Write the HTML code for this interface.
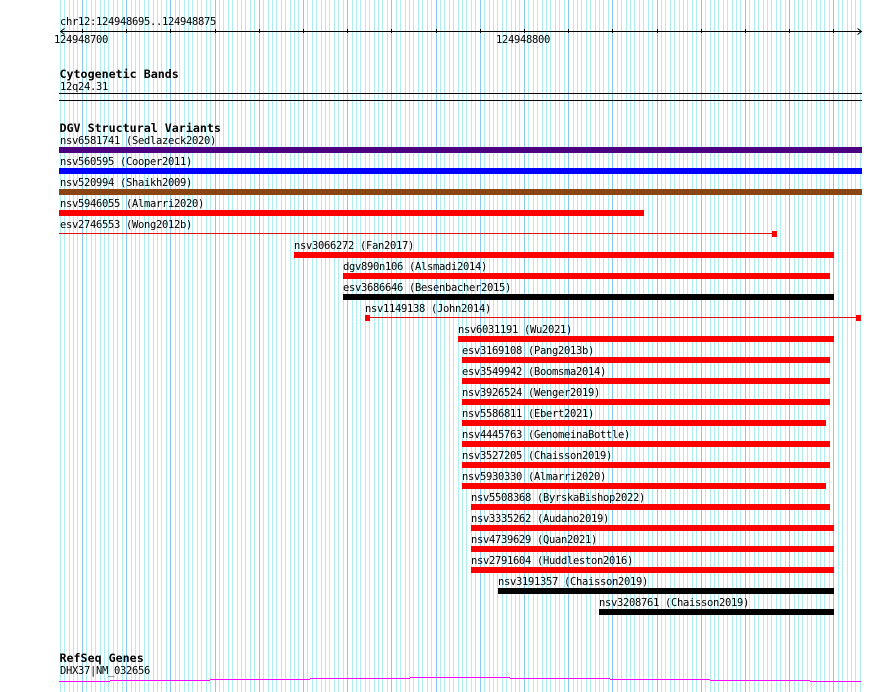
<!DOCTYPE html>
<html>
<head>
<meta charset="utf-8">
<title>Genome view</title>
<style>
html,body{margin:0;padding:0;background:#fff;width:890px;height:692px;overflow:hidden}
svg{display:block;position:absolute;left:0;top:0}
text{font-family:"DejaVu Sans Mono","Liberation Mono",monospace;font-size:10.5px;letter-spacing:-0.32px;fill:#000;white-space:pre}
text.b{font-weight:bold;font-size:11.67px;letter-spacing:0}
</style>
</head>
<body>
<svg width="890" height="692" viewBox="0 0 890 692" xmlns="http://www.w3.org/2000/svg">
<g shape-rendering="crispEdges">
<g transform="translate(.5 0)" fill="none" stroke-width="1">
<path stroke="#aeeeee" d="M60 0v692M64 0v692M69 0v692M73 0v692M77 0v692M86 0v692M91 0v692M95 0v692M100 0v692M104 0v692M108 0v692M113 0v692M117 0v692M122 0v692M131 0v692M135 0v692M139 0v692M144 0v692M148 0v692M153 0v692M157 0v692M161 0v692M166 0v692M175 0v692M179 0v692M184 0v692M188 0v692M192 0v692M197 0v692M201 0v692M206 0v692M210 0v692M219 0v692M223 0v692M228 0v692M232 0v692M237 0v692M241 0v692M245 0v692M250 0v692M254 0v692M263 0v692M268 0v692M272 0v692M276 0v692M281 0v692M285 0v692M290 0v692M294 0v692M298 0v692M307 0v692M312 0v692M316 0v692M321 0v692M325 0v692M329 0v692M334 0v692M338 0v692M343 0v692M352 0v692M356 0v692M360 0v692M365 0v692M369 0v692M374 0v692M378 0v692M382 0v692M387 0v692M396 0v692M400 0v692M405 0v692M409 0v692M413 0v692M418 0v692M422 0v692M427 0v692M431 0v692M440 0v692M444 0v692M449 0v692M453 0v692M458 0v692M462 0v692M466 0v692M471 0v692M475 0v692M484 0v692M489 0v692M493 0v692M497 0v692M502 0v692M506 0v692M511 0v692M515 0v692M519 0v692M528 0v692M533 0v692M537 0v692M542 0v692M546 0v692M550 0v692M555 0v692M559 0v692M564 0v692M573 0v692M577 0v692M581 0v692M586 0v692M590 0v692M595 0v692M599 0v692M603 0v692M608 0v692M617 0v692M621 0v692M626 0v692M630 0v692M634 0v692M639 0v692M643 0v692M648 0v692M652 0v692M661 0v692M665 0v692M670 0v692M674 0v692M679 0v692M683 0v692M687 0v692M692 0v692M696 0v692M705 0v692M710 0v692M714 0v692M718 0v692M723 0v692M727 0v692M732 0v692M736 0v692M740 0v692M749 0v692M754 0v692M758 0v692M763 0v692M767 0v692M771 0v692M776 0v692M780 0v692M785 0v692M794 0v692M798 0v692M802 0v692M807 0v692M811 0v692M816 0v692M820 0v692M824 0v692M829 0v692M838 0v692M842 0v692M847 0v692M851 0v692M855 0v692M860 0v692"/>
<path stroke="#88c8f4" d="M82 0v692M126 0v692M170 0v692M215 0v692M259 0v692M303 0v692M347 0v692M391 0v692M436 0v692M480 0v692M524 0v692M568 0v692M612 0v692M657 0v692M701 0v692M745 0v692M789 0v692M833 0v692"/>
</g>

<!-- ruler -->
<rect x="60" y="31" width="801" height="1" fill="#000"/>
<path transform="translate(.5 0)" fill="none" stroke="#000" d="M82 29v4M126 29v4M170 29v4M215 29v4M259 29v4M303 29v4M347 29v4M391 29v4M436 29v4M480 29v4M524 29v4M568 29v4M612 29v4M657 29v4M701 29v4M745 29v4M789 29v4M833 29v4"/>

<!-- cytoband lines -->
<rect x="59" y="93" width="803" height="1" fill="#000"/>
<rect x="59" y="100" width="803" height="1" fill="#000"/>

<!-- variants -->
<rect x="59" y="147" width="803" height="6" fill="#4b0082"/>
<rect x="59" y="168" width="803" height="6" fill="#0000ff"/>
<rect x="59" y="189" width="803" height="6" fill="#8b4513"/>
<rect x="59" y="210" width="585" height="6" fill="#ff0000"/>
<rect x="59" y="233" width="713" height="1" fill="#e01010"/>
<rect x="772" y="231" width="5" height="6" fill="#ff0000"/>
<rect x="294" y="252" width="540" height="6" fill="#ff0000"/>
<rect x="343" y="273" width="487" height="6" fill="#ff0000"/>
<rect x="343" y="294" width="491" height="6" fill="#000"/>
<rect x="365" y="315" width="5" height="6" fill="#ff0000"/>
<rect x="370" y="317" width="486" height="1" fill="#e01010"/>
<rect x="856" y="315" width="5" height="6" fill="#ff0000"/>
<rect x="458" y="336" width="376" height="6" fill="#ff0000"/>
<rect x="462" y="357" width="368" height="6" fill="#ff0000"/>
<rect x="462" y="378" width="368" height="6" fill="#ff0000"/>
<rect x="462" y="399" width="368" height="6" fill="#ff0000"/>
<rect x="462" y="420" width="364" height="6" fill="#ff0000"/>
<rect x="462" y="441" width="368" height="6" fill="#ff0000"/>
<rect x="462" y="462" width="368" height="6" fill="#ff0000"/>
<rect x="462" y="483" width="364" height="6" fill="#ff0000"/>
<rect x="471" y="504" width="359" height="6" fill="#ff0000"/>
<rect x="471" y="525" width="363" height="6" fill="#ff0000"/>
<rect x="471" y="546" width="363" height="6" fill="#ff0000"/>
<rect x="471" y="567" width="363" height="6" fill="#ff0000"/>
<rect x="498" y="588" width="336" height="6" fill="#000"/>
<rect x="599" y="609" width="235" height="6" fill="#000"/>

<!-- gene -->
<g fill="#ff00ff">
<rect x="59" y="681" width="51" height="1"/>
<rect x="110" y="680" width="100" height="1"/>
<rect x="210" y="679" width="100" height="1"/>
<rect x="310" y="678" width="100" height="1"/>
<rect x="410" y="677" width="100" height="1"/>
<rect x="510" y="678" width="100" height="1"/>
<rect x="610" y="679" width="100" height="1"/>
<rect x="710" y="680" width="100" height="1"/>
<rect x="810" y="681" width="51" height="1"/>
</g>
</g>

<!-- ruler arrows -->
<path fill="none" stroke="#000" stroke-width="1" d="M64.5 28.5L60.5 31.5L64.5 34.5M857.5 28.5L861.5 31.5L857.5 34.5"/>

<text class="b" x="59.5" y="78">Cytogenetic Bands</text>
<text class="b" x="59.5" y="132">DGV Structural Variants</text>
<text class="b" x="59.5" y="662">RefSeq Genes</text>

<text x="60" y="25">chr12:124948695..124948875</text>
<text x="54" y="43">124948700</text>
<text x="496" y="43">124948800</text>
<text x="60" y="90">12q24.31</text>
<text x="60" y="144">nsv6581741 (Sedlazeck2020)</text>
<text x="60" y="165">nsv560595 (Cooper2011)</text>
<text x="60" y="186">nsv520994 (Shaikh2009)</text>
<text x="60" y="207">nsv5946055 (Almarri2020)</text>
<text x="60" y="228">esv2746553 (Wong2012b)</text>
<text x="294" y="249">nsv3066272 (Fan2017)</text>
<text x="343" y="270">dgv890n106 (Alsmadi2014)</text>
<text x="343" y="291">esv3686646 (Besenbacher2015)</text>
<text x="365" y="312">nsv1149138 (John2014)</text>
<text x="458" y="333">nsv6031191 (Wu2021)</text>
<text x="462" y="354">esv3169108 (Pang2013b)</text>
<text x="462" y="375">esv3549942 (Boomsma2014)</text>
<text x="462" y="396">nsv3926524 (Wenger2019)</text>
<text x="462" y="417">nsv5586811 (Ebert2021)</text>
<text x="462" y="438">nsv4445763 (GenomeinaBottle)</text>
<text x="462" y="459">nsv3527205 (Chaisson2019)</text>
<text x="462" y="480">nsv5930330 (Almarri2020)</text>
<text x="471" y="501">nsv5508368 (ByrskaBishop2022)</text>
<text x="471" y="522">nsv3335262 (Audano2019)</text>
<text x="471" y="543">nsv4739629 (Quan2021)</text>
<text x="471" y="564">nsv2791604 (Huddleston2016)</text>
<text x="498" y="585">nsv3191357 (Chaisson2019)</text>
<text x="599" y="606">nsv3208761 (Chaisson2019)</text>
<text x="60" y="674">DHX37|NM_032656</text>
</svg>
</body>
</html>
